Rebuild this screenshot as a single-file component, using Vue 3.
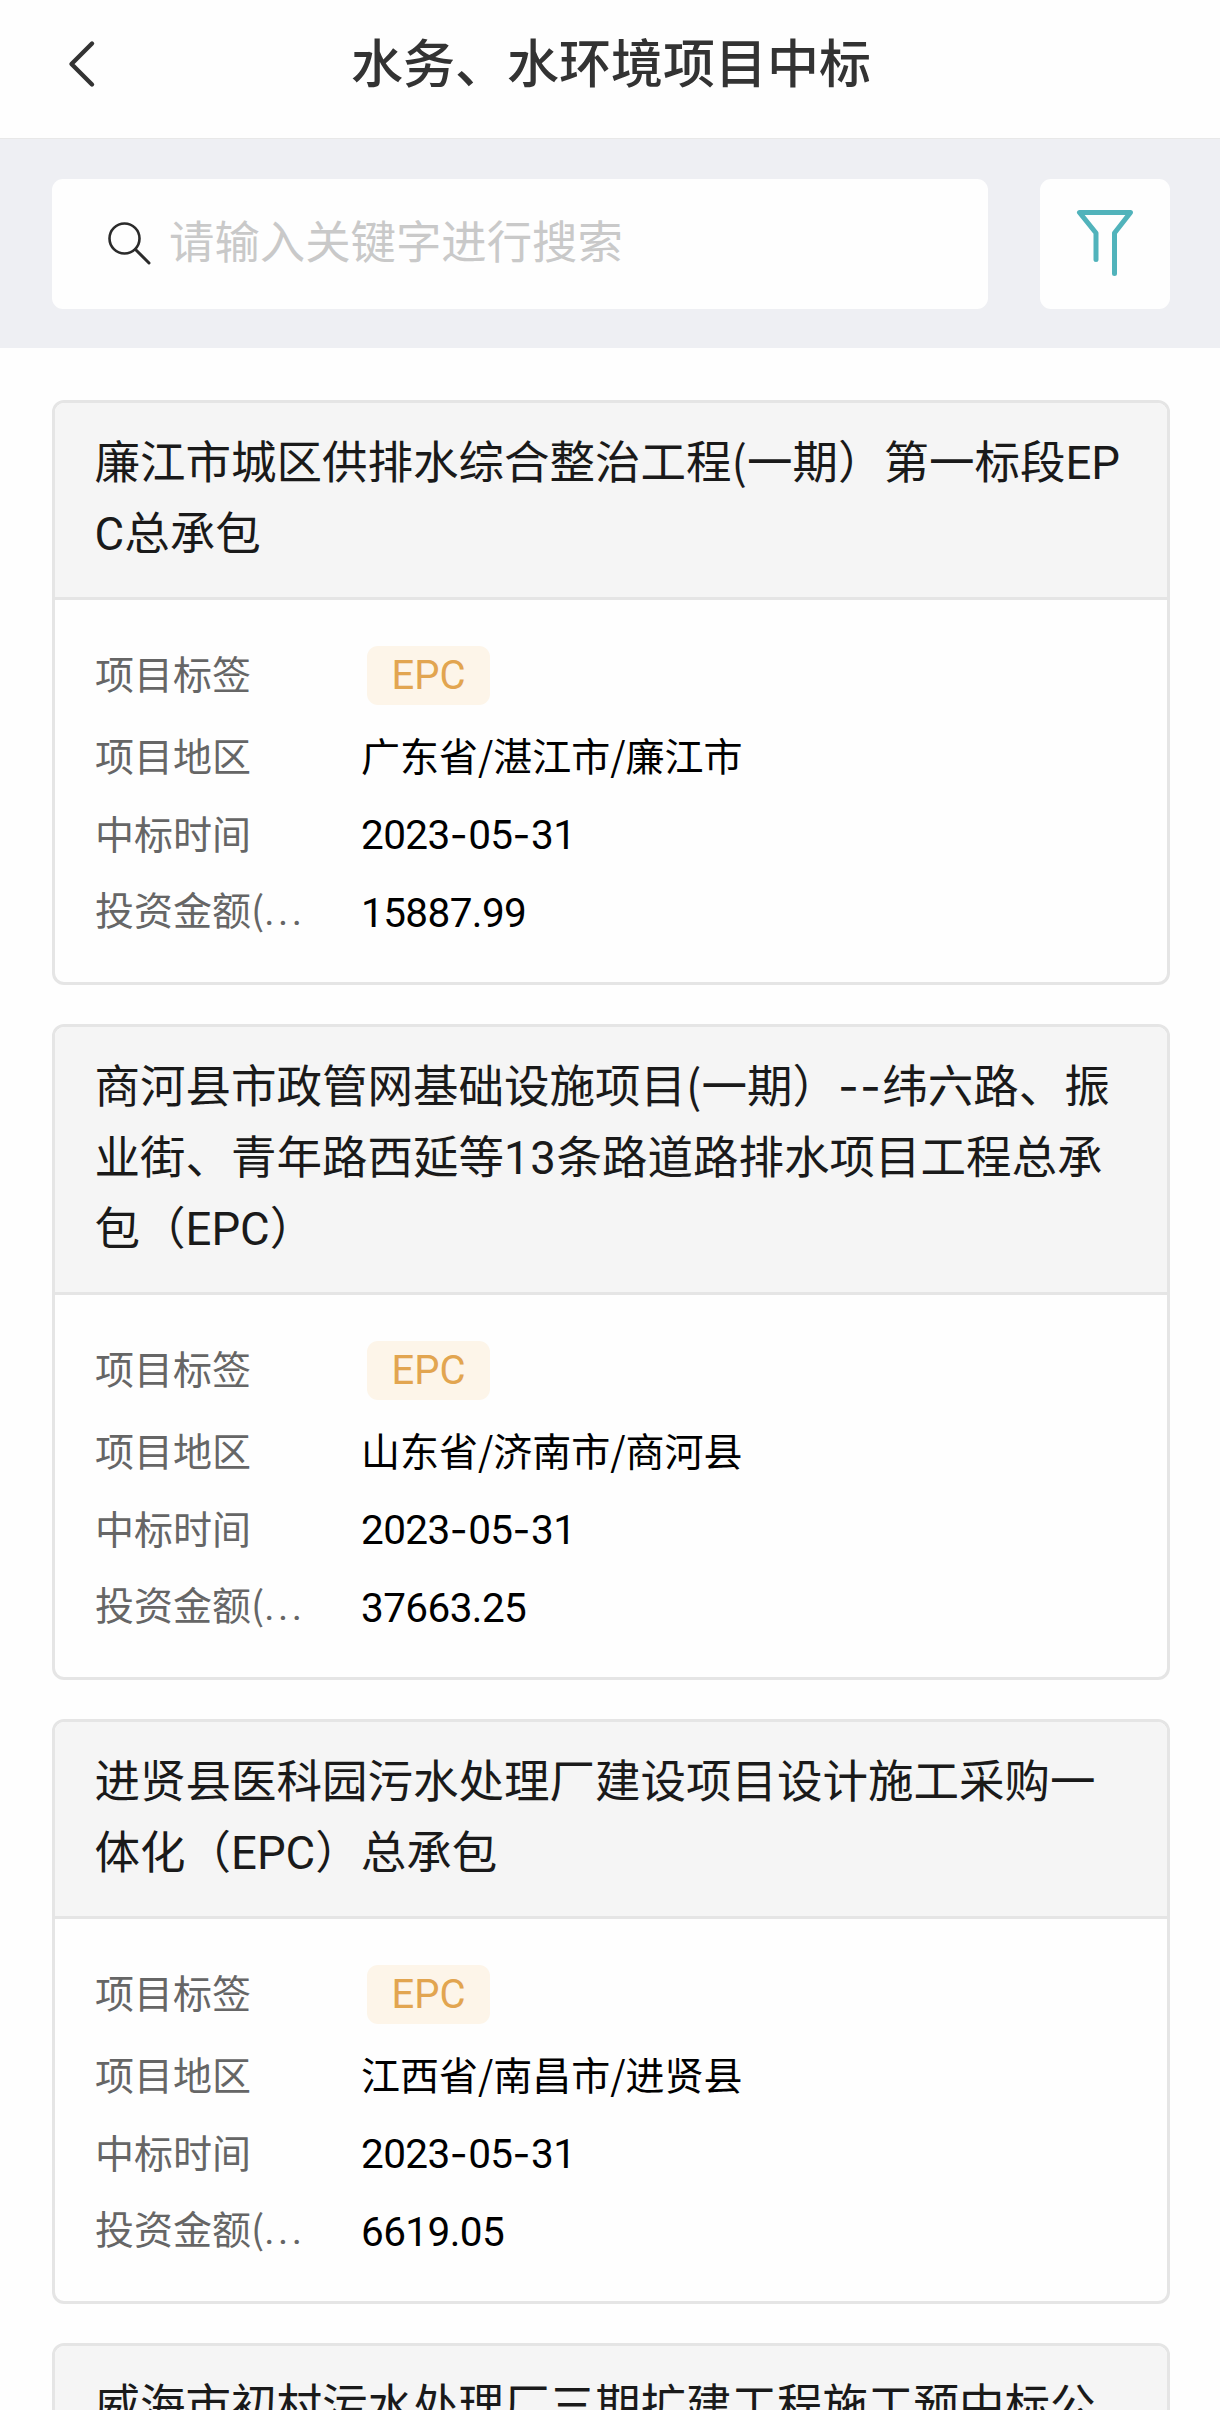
<script setup>
const projects = [
  {
    title: ['廉江市城区供排水综合整治工程(一期）第一标段EP', 'C总承包'],
    region: '广东省/湛江市/廉江市',
    date: '2023-05-31',
    amount: '15887.99',
  },
  {
    title: [
      '商河县市政管网基础设施项目(一期）--纬六路、振',
      '业街、青年路西延等13条路道路排水项目工程总承',
      '包（EPC）',
    ],
    region: '山东省/济南市/商河县',
    date: '2023-05-31',
    amount: '37663.25',
  },
  {
    title: ['进贤县医科园污水处理厂建设项目设计施工采购一', '体化（EPC）总承包'],
    region: '江西省/南昌市/进贤县',
    date: '2023-05-31',
    amount: '6619.05',
  },
  {
    title: ['威海市初村污水处理厂三期扩建工程施工预中标公'],
  },
]

// Split mixed text into runs so letters, digits and dashes get their own face.
function runs(text) {
  return (text.match(/[A-Z]+|[\d.]+|-+|[^A-Z\d.-]+/g) || []).map((t) => {
    let kind = 'han'
    if (/^[A-Z]/.test(t)) kind = 'latin'
    else if (/^[\d.]/.test(t)) kind = 'num'
    else if (t[0] === '-') kind = 'dash'
    return { t, kind }
  })
}
</script>

<template>
  <div class="page">
    <header class="nav">
      <button class="back" aria-label="返回">
        <svg width="30" height="50" viewBox="0 0 30 50">
          <path d="M25 4.500 4.500 25 25 45.500" fill="none" stroke="#333" stroke-width="4.400" stroke-linecap="round" stroke-linejoin="round" />
        </svg>
      </button>
      <h1>水务、水环境项目中标</h1>
    </header>

    <section class="tools">
      <div class="search">
        <svg class="lens" width="46" height="46" viewBox="0 0 46 46">
          <circle cx="18.500" cy="17.500" r="15" fill="none" stroke="#2b2b2b" stroke-width="2.600" />
          <path d="M29.500 28.500 43 42" fill="none" stroke="#2b2b2b" stroke-width="3" stroke-linecap="round" />
        </svg>
        <span class="hint">请输入关键字进行搜索</span>
      </div>
      <button class="filter" aria-label="筛选">
        <svg width="60" height="70" viewBox="0 0 60 70">
          <path d="M21 50.500V24L4.500 3.500H55.500L39.500 24V64.500" fill="none" stroke="#51b3bb" stroke-width="5" stroke-linecap="round" stroke-linejoin="round" />
        </svg>
      </button>
    </section>

    <main class="list">
      <article v-for="(p, i) in projects" :key="i" class="card">
        <h2>
          <span v-for="(line, j) in p.title" :key="j" class="line"><span v-for="(r, k) in runs(line)" :key="k" :class="r.kind">{{ r.t }}</span></span>
        </h2>
        <div v-if="p.region" class="body">
          <div class="row first">
            <span class="label">项目标签</span>
            <span class="tag">EPC</span>
          </div>
          <div class="row">
            <span class="label">项目地区</span>
            <span class="value region">{{ p.region }}</span>
          </div>
          <div class="row">
            <span class="label">中标时间</span>
            <span class="value"><span v-for="(r, k) in runs(p.date)" :key="k" :class="r.kind">{{ r.t }}</span></span>
          </div>
          <div class="row">
            <span class="label">投资金额(<span class="dots">...</span></span>
            <span class="value"><span class="num">{{ p.amount }}</span></span>
          </div>
        </div>
      </article>
    </main>
  </div>
</template>

<style>
body {
  margin: 0;
}
</style>

<style scoped>
.page {
  width: 1220px;
  height: 2410px;
  overflow: hidden;
  background: #fefefe;
  font-family: 'Noto Sans CJK SC', sans-serif;
}
.nav {
  display: grid;
  grid-template-columns: 120px 1fr 120px;
  align-items: center;
  height: 138px;
  box-sizing: border-box;
  padding-bottom: 10px;
  background: #fefefe;
}
button {
  border: 0;
  padding: 0;
  background: none;
}
.back {
  display: flex;
  padding-left: 67px;
}
h1 {
  margin: 0;
  padding: 0 0 7px 2px;
  text-align: center;
  font-size: 52px;
  line-height: 76px;
  font-weight: 500;
  color: #333;
}
.tools {
  display: flex;
  justify-content: space-between;
  box-sizing: border-box;
  height: 210px;
  padding: 40px 50px 39px 52px;
  border-top: 1px solid #e8e8e8;
  background: #eeeff3;
}
.search {
  display: flex;
  align-items: center;
  box-sizing: border-box;
  width: 936px;
  height: 130px;
  padding-left: 54px;
  border-radius: 11px;
  background: #fefefe;
}
.hint {
  margin-left: 17px;
  padding-bottom: 11px;
  font-size: 45.400px;
  line-height: 66px;
  color: #c9c9c9;
}
.filter {
  display: flex;
  align-items: center;
  justify-content: center;
  width: 130px;
  height: 130px;
  border-radius: 11px;
  background: #fefefe;
}
.list {
  display: flex;
  flex-direction: column;
  gap: 39px;
  padding: 52px 50px 0 52px;
}
.card {
  flex: none;
  border: 3px solid #e5e5e5;
  border-radius: 12px;
  overflow: hidden;
}
h2 {
  margin: 0;
  padding: 21px 0 31px 39.500px;
  border-bottom: 3px solid #e5e5e5;
  background: #f5f5f5;
  font-size: 45.500px;
  font-weight: 400;
  color: #1a1a1a;
}
.line {
  display: block;
  height: 71px;
  line-height: 71px;
  white-space: nowrap;
}
.latin {
  font-family: Roboto, sans-serif;
}
.num {
  font-family: Roboto, sans-serif;
  letter-spacing: 0.700px;
}
.dash {
  font-family: Inter, sans-serif;
  letter-spacing: 1.300px;
}
.body {
  padding: 30px 0 32px 40px;
}
.row {
  display: flex;
  align-items: center;
  height: 78px;
  font-size: 39px;
  line-height: 74px;
  white-space: nowrap;
}
.row.first {
  height: 86px;
}
.label {
  width: 266px;
  padding-bottom: 3px;
  color: #666;
}
.dots {
  font-family: Roboto, sans-serif;
  letter-spacing: 3.500px;
}
.value {
  color: #000;
}
.region {
  padding-bottom: 3px;
}
.value .num {
  font-size: 40.500px;
  letter-spacing: -0.600px;
}
.value .dash {
  letter-spacing: 0.600px;
}
.tag {
  box-sizing: border-box;
  width: 123px;
  height: 59px;
  margin: 4px 0 0 6px;
  border-radius: 11px;
  background: #fdf5e9;
  font-family: Roboto, sans-serif;
  font-size: 40px;
  line-height: 59px;
  text-align: center;
  color: #e2a550;
}
</style>
